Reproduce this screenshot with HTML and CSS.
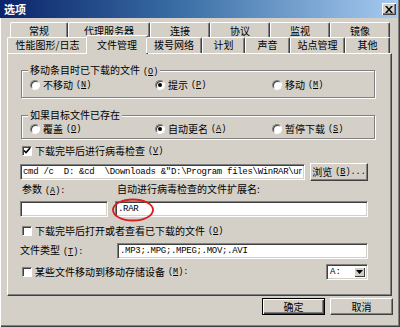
FILE: index.html
```html
<!DOCTYPE html>
<html lang="zh-CN">
<head>
    <meta charset="UTF-8">
    <title>选项</title>
    <link rel="stylesheet" href="styles.css">
</head>
<body>
    <div class="dialog">
        <div class="titlebar">
            <span class="title">选项</span>
            <span class="close-btn">
                <svg width="8" height="7" viewBox="0 0 8 7">
                    <path d="M0 0h2l2 2.4L6 0h2L5 3.5 8 7H6L4 4.6 2 7H0l3-3.5z" fill="#000" />
                </svg>
            </span>
        </div>

        <div class="tabs">
            <div class="tab-row row-back">
                <div class="tab w58">常规</div>
                <div class="tab w82">代理服务器</div>
                <div class="tab w60">连接</div>
                <div class="tab w60">协议</div>
                <div class="tab w60">监视</div>
                <div class="tab w60">镜像</div>
            </div>
            <div class="tab-row row-front">
                <div class="tab w81">性能图形/日志</div>
                <div class="tab w58 active">文件管理</div>
                <div class="tab w56">拨号网络</div>
                <div class="tab w43">计划</div>
                <div class="tab w45">声音</div>
                <div class="tab w55">站点管理</div>
                <div class="tab w45">其他</div>
            </div>
        </div>

        <div class="panel">
            <div class="group g-move">
                <div class="group-title">移动条目时已下载的文件<span class="key">(<u>O</u>)</span></div>
                <div class="radios">
                    <label class="radio"><span class="radio-box"></span>不移动<span class="key">(<u>N</u>)</span></label>
                    <label class="radio"><span class="radio-box on"></span>提示<span class="key">(<u>P</u>)</span></label>
                    <label class="radio"><span class="radio-box"></span>移动<span class="key">(<u>M</u>)</span></label>
                </div>
            </div>

            <div class="group g-exist">
                <div class="group-title">如果目标文件已存在</div>
                <div class="radios">
                    <label class="radio"><span class="radio-box"></span>覆盖<span class="key">(<u>O</u>)</span></label>
                    <label class="radio"><span class="radio-box on"></span>自动更名<span class="key">(<u>A</u>)</span></label>
                    <label class="radio"><span class="radio-box"></span>暂停下载<span class="key">(<u>S</u>)</span></label>
                </div>
            </div>

            <label class="check check-virus">
                <span class="check-box">
                    <svg width="8" height="8" viewBox="0 0 8 8">
                        <path d="M1 3.5l2 2 4-4.5" stroke="#000" stroke-width="1.6" fill="none" />
                    </svg>
                </span>下载完毕后进行病毒检查<span class="key">(<u>V</u>)</span>
            </label>

            <div class="cmd-row">
                <input class="field cmd" type="text" value="cmd /c  D: &amp;cd  \Downloads &amp;&quot;D:\Program files\WinRAR\unrar.exe&quot; x">
                <div class="button browse">浏览<span class="key">(<u>B</u>)...</span></div>
            </div>

            <div class="label-row">
                <span>参数<span class="key">(<u>A</u>):</span></span>
                <span>自动进行病毒检查的文件扩展名:</span>
            </div>

            <div class="input-row">
                <input class="field" type="text" value="">
                <div class="ext-wrap">
                    <input class="field" type="text" value=".RAR">
                    <svg class="mark" width="44" height="26" viewBox="0 0 44 26">
                        <ellipse cx="22" cy="12" rx="20" ry="10.5" stroke="#d81e1e" stroke-width="1.8" fill="none" />
                    </svg>
                </div>
            </div>

            <label class="check check-open">
                <span class="check-box"></span>下载完毕后打开或者查看已下载的文件<span class="key">(<u>O</u>)</span>
            </label>

            <div class="type-row">
                <span class="type-label">文件类型<span class="key">(<u>T</u>):</span></span>
                <input class="field types" type="text" value=".MP3;.MPG;.MPEG;.MOV;.AVI">
            </div>

            <div class="drive-row">
                <label class="check">
                    <span class="check-box"></span>某些文件移动到移动存储设备<span class="key">(<u>M</u>):</span>
                </label>
                <div class="combo">
                    <span class="combo-text">A:</span>
                    <span class="combo-btn">
                        <svg width="7" height="4" viewBox="0 0 7 4"><path d="M0 0h7L3.5 4z" fill="#000" /></svg>
                    </span>
                </div>
            </div>
        </div>

        <div class="actions">
            <div class="button default">确定</div>
            <div class="button">取消</div>
        </div>
    </div>
</body>
</html>
```

FILE: styles.css
```css
* {
    margin: 0;
    padding: 0;
    box-sizing: border-box;
}

body {
    width: 400px;
    height: 328px;
    overflow: hidden;
    background: #d4d0c8;
    font-family: "Noto Sans CJK SC", sans-serif;
    font-size: 10px;
    line-height: 12px;
    color: #000;
}

.dialog {
    width: 400px;
    height: 327px;
    background: #d4d0c8;
    box-shadow: inset 1px 0 #fff, inset -1px -1px #404040, inset -2px -2px #808080;
}

/* title bar */
.titlebar {
    width: 398px;
    height: 18px;
    display: flex;
    align-items: center;
    justify-content: space-between;
    padding: 0 2px 0 4px;
    background: linear-gradient(90deg, #0a246a 0%, #3a6ea5 45%, #a6caf0 100%);
}

.title {
    font-weight: 700;
    font-size: 11px;
    color: #fff;
}

.close-btn {
    width: 14px;
    height: 12px;
    display: flex;
    justify-content: center;
    align-items: center;
    background: #d4d0c8;
    box-shadow: inset 1px 1px #fff, inset -1px -1px #404040, inset -2px -2px #808080;
}

.key {
    margin-left: 3px;
    font-family: "Liberation Mono", monospace;
    font-size: 8.5px;
}

/* tabs */
.tabs {
    margin-top: 4px;
}

.tab-row {
    display: flex;
}

.row-back {
    height: 15px;
    padding-left: 10px;
}

.row-front {
    height: 16px;
    padding-left: 7px;
    position: relative;
    z-index: 1;
}

.tab {
    flex: none;
    text-align: center;
    border-top: 1px solid #fff;
    border-left: 1px solid #fff;
    border-right: 1px solid #404040;
    border-radius: 2px 2px 0 0;
    box-shadow: inset -1px 0 #808080;
    background: #d4d0c8;
}

.row-back .tab {
    height: 15px;
    padding-top: 2px;
}

.row-front .tab {
    height: 16px;
    padding-top: 1px;
}

.row-front .tab.active {
    height: 19px;
    margin: -2px -2px 0;
    padding-top: 3px;
}

.w43 { width: 43px; }
.w45 { width: 45px; }
.w55 { width: 55px; }
.w56 { width: 56px; }
.w58 { width: 58px; }
.w60 { width: 60px; }
.w81 { width: 81px; }
.w82 { width: 82px; }
.tab.active.w58 { width: 62px; }

/* page */
.panel {
    width: 385px;
    height: 243px;
    margin-left: 7px;
    padding: 0 23px 0 12px;
    border: 1px solid;
    border-color: #fff #404040 #404040 #fff;
    box-shadow: inset -1px -1px #808080;
}

.group {
    margin: 0 -7px 0 1px;
    padding: 0 0 5px 8px;
    border: 1px solid #808080;
    box-shadow: 1px 1px #fff, inset 1px 1px #fff;
}

.g-move {
    margin-top: 16px;
}

.g-exist {
    margin-top: 17px;
    padding-bottom: 2px;
}

.g-exist .radios {
    margin-top: 1px;
}

.group-title {
    display: table;
    margin: -7px 0 0 -2px;
    padding: 0 2px;
    background: #d4d0c8;
}

.radios {
    display: grid;
    grid-template-columns: 125px 117px auto;
    align-items: center;
    height: 14px;
}

.radio,
.check {
    display: flex;
    align-items: center;
    white-space: nowrap;
}

.radio-box {
    width: 10px;
    height: 10px;
    margin-right: 3px;
    border-radius: 50%;
    background: #fff;
    border: 1px solid;
    border-color: #808080 #fff #fff #808080;
    box-shadow: inset 1px 1px #404040;
    display: flex;
    justify-content: center;
    align-items: center;
}

.radio-box.on::after {
    content: "";
    width: 4px;
    height: 4px;
    border-radius: 50%;
    background: #000;
}

.check {
    height: 12px;
}

.check-box {
    width: 10px;
    height: 10px;
    margin: 0 3px 0 2px;
    background: #fff;
    border: 1px solid;
    border-color: #808080 #fff #fff #808080;
    box-shadow: inset 1px 1px #404040;
    display: flex;
    justify-content: center;
    align-items: center;
}

.check-virus {
    margin-top: 6px;
}

.field {
    height: 16px;
    padding: 0 2px;
    background: #fff;
    border: 1px solid;
    border-color: #808080 #fff #fff #808080;
    box-shadow: inset 1px 1px #404040, inset -1px -1px #d4d0c8;
    font-family: "Liberation Mono", monospace;
    font-size: 9px;
    letter-spacing: -0.3px;
    color: #000;
    outline: none;
    white-space: pre;
}

.button {
    height: 17px;
    display: flex;
    justify-content: center;
    align-items: center;
    background: #d4d0c8;
    border: 1px solid;
    border-color: #fff #404040 #404040 #fff;
    box-shadow: inset -1px -1px #808080;
}

.cmd-row {
    display: flex;
    align-items: center;
    gap: 5px;
    height: 18px;
    margin-top: 6px;
}

.cmd {
    width: 285px;
}

.browse {
    width: 58px;
    height: 18px;
}

.label-row {
    display: grid;
    grid-template-columns: 95px auto;
    margin-top: 2px;
    padding-left: 2px;
}

.input-row {
    display: grid;
    grid-template-columns: 88px 253px;
    gap: 7px;
    margin-top: 4px;
}

.input-row .field {
    width: 100%;
}

.ext-wrap {
    position: relative;
}

.mark {
    position: absolute;
    left: -4px;
    top: -3px;
}

.check-open {
    margin-top: 8px;
}

.type-row {
    display: flex;
    align-items: center;
    margin-top: 6px;
}

.type-label {
    width: 97px;
}

.types {
    width: 251px;
}

.drive-row {
    display: flex;
    align-items: center;
    justify-content: space-between;
    height: 16px;
    margin-top: 5px;
}

.combo {
    width: 42px;
    height: 16px;
    display: flex;
    padding: 2px 2px 2px 3px;
    background: #fff;
    border: 1px solid;
    border-color: #808080 #fff #fff #808080;
    box-shadow: inset 1px 1px #404040, inset -1px -1px #d4d0c8;
}

.combo-text {
    flex: 1;
    font-family: "Liberation Mono", monospace;
    font-size: 9px;
    line-height: 10px;
}

.combo-btn {
    width: 11px;
    display: flex;
    justify-content: center;
    align-items: center;
    background: #d4d0c8;
    box-shadow: inset 1px 1px #fff, inset -1px -1px #404040;
}

/* bottom buttons */
.actions {
    display: flex;
    justify-content: flex-end;
    gap: 5px;
    margin-top: 2px;
    padding-right: 7px;
}

.actions .button {
    width: 63px;
}

.button.default {
    border-color: #000;
    box-shadow: inset 1px 1px #fff, inset -1px -1px #404040, inset -2px -2px #808080;
}
```
